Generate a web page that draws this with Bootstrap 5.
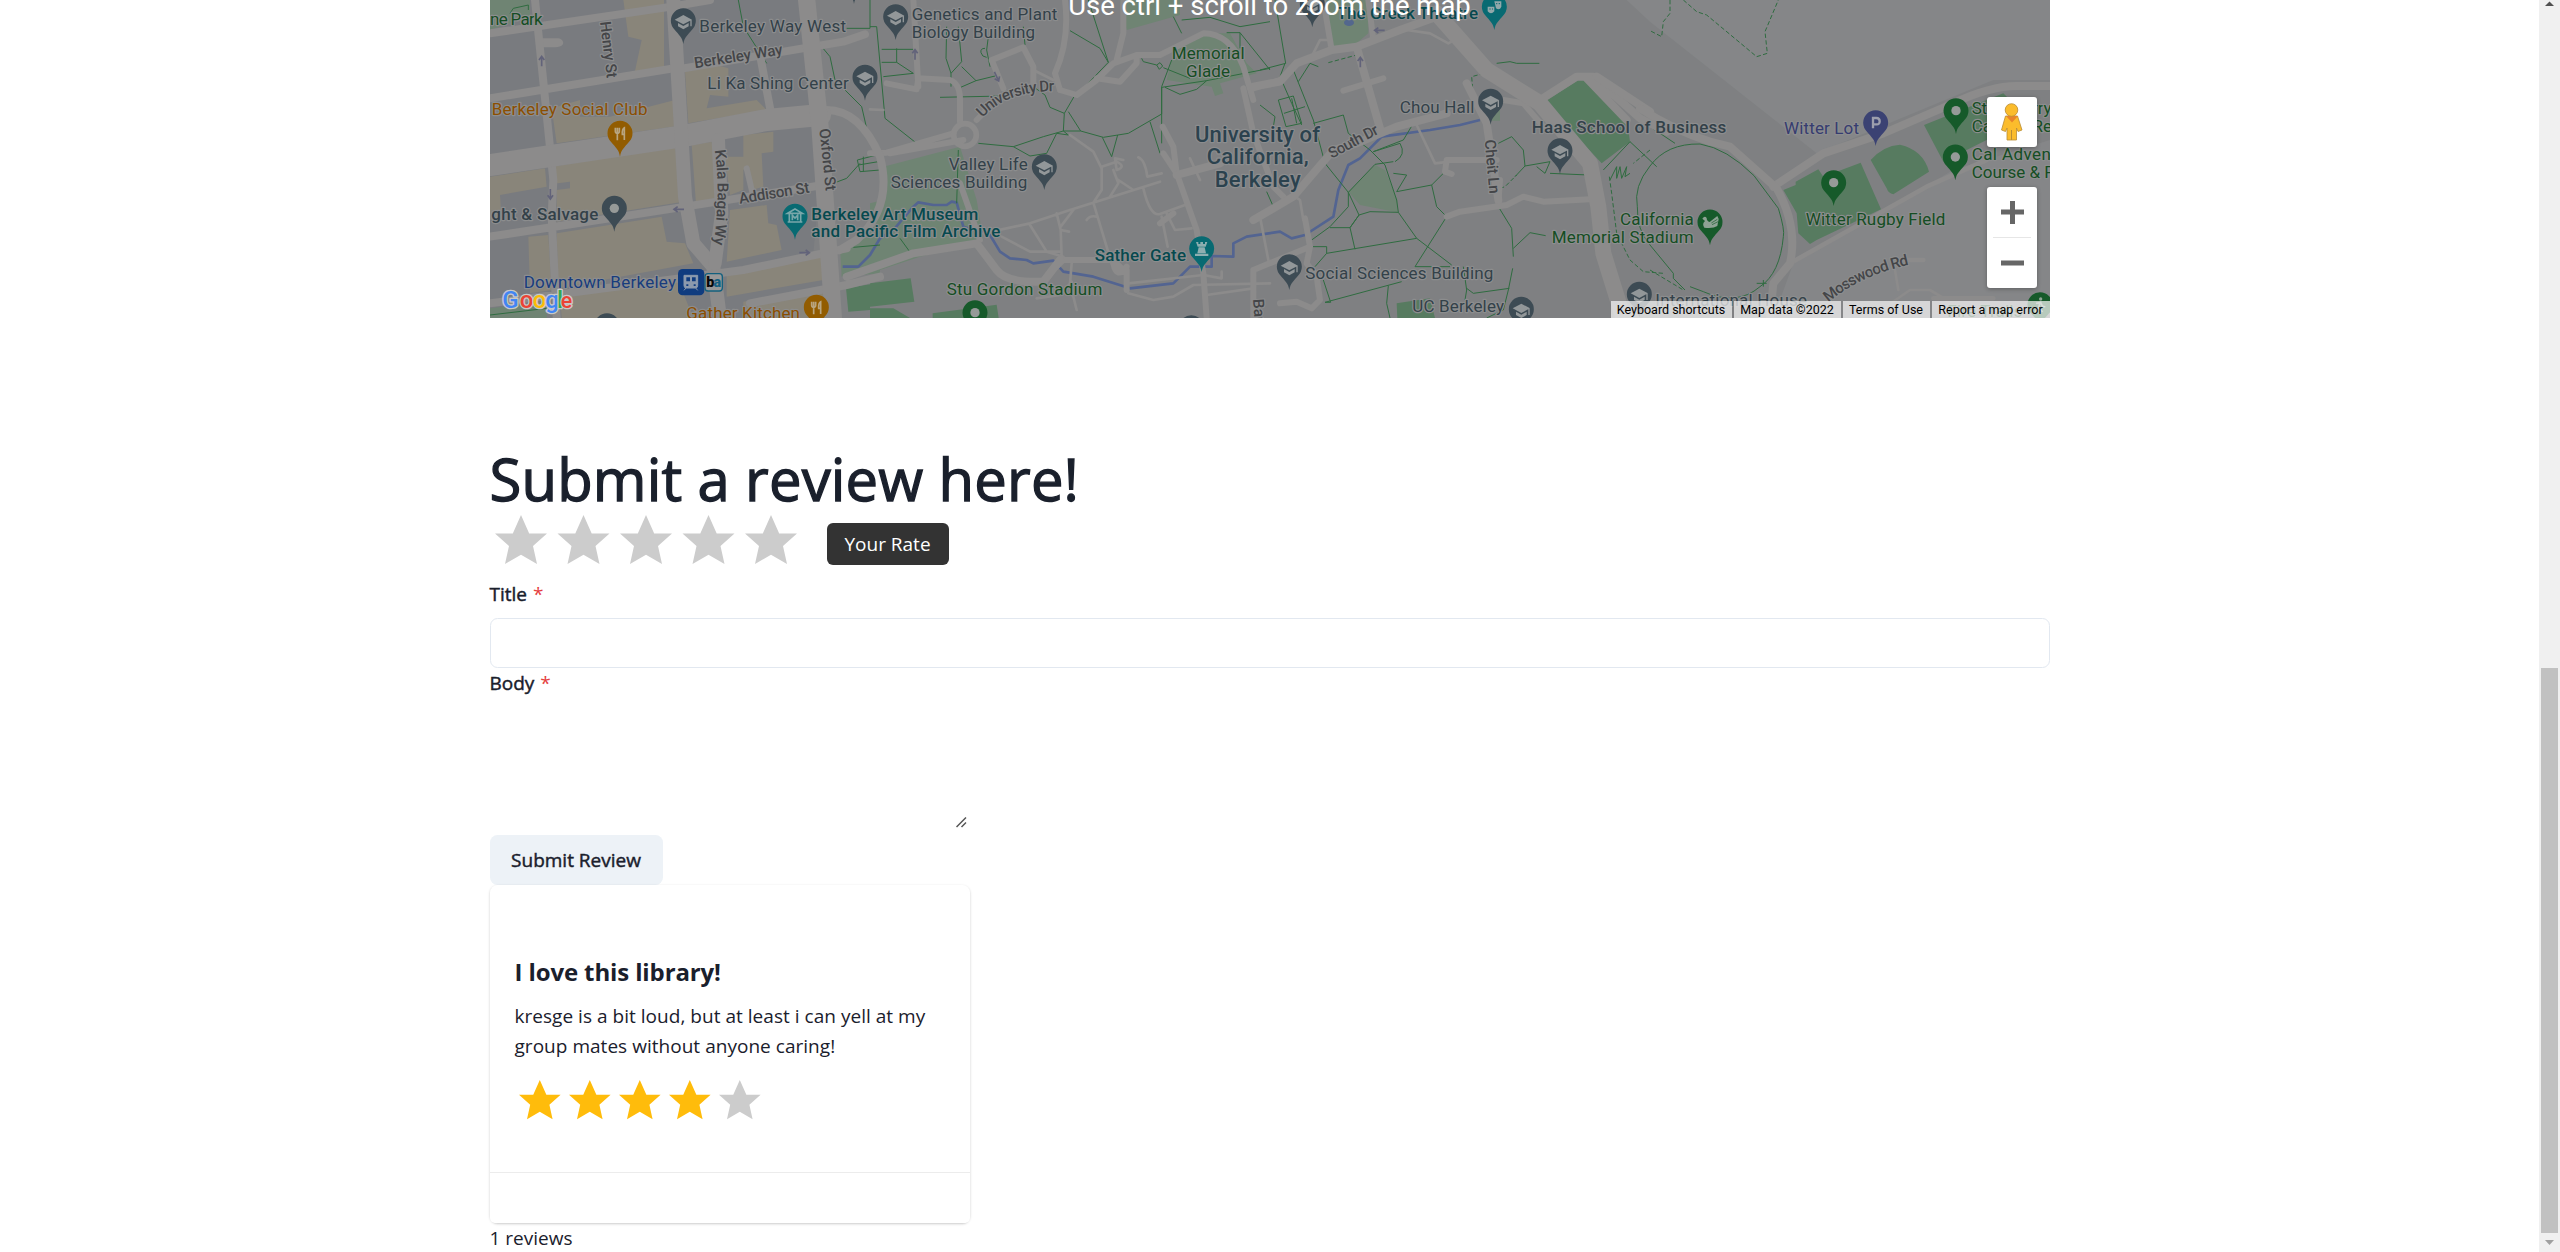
<!DOCTYPE html>
<html lang="en">
<head>
<meta charset="utf-8">
<meta name="viewport" content="width=device-width, initial-scale=1">
<title>Library reviews</title>
<link href="https://cdn.jsdelivr.net/npm/bootstrap@5.3.0/dist/css/bootstrap.min.css" rel="stylesheet">
<style>
body{font-family:"Open Sans","Noto Sans",sans-serif;font-size:19px;line-height:30px;color:#1a202c;background:#fff;height:1252px;overflow:hidden}
.page-col{width:1560px}
.map-box{height:318px;font-family:Roboto,sans-serif;background:#808183}
.map-hint{top:-11px;left:0;right:0;color:#fff;font-size:27.5px;line-height:34px}
.map-legal{right:0;bottom:0;height:17px;font-size:12.5px;line-height:17px;color:#000;gap:2px}
.map-legal span{background:rgba(245,245,245,.72);text-align:center;white-space:nowrap}
.map-btn{right:13px;width:50px;background:#fff;border-radius:3px;box-shadow:0 1px 4px rgba(0,0,0,.3)}
.peg{top:97px;height:50px}.zoomer{top:187px;height:101px}
.review-title{font-size:58px;font-weight:400;-webkit-text-stroke:1.3px #1a202c;letter-spacing:.15px;line-height:49px;margin:136px 0 0;height:60px;white-space:nowrap}
.rate-row{height:52px}
.rate-tip{background:#333;color:#fff;border-radius:6px;width:122px;height:42px;line-height:42px;text-align:center;margin:8.5px 0 0 20px;white-space:nowrap}
.field-name{-webkit-text-stroke:.45px #1a202c;display:block;height:30px}
.field-name i{font-style:normal;-webkit-text-stroke:0;color:#e53e3e;margin-left:6px}
.field-first{margin-top:13px}
.title-input{height:50px;border:1px solid #e2e8f0;border-radius:7.5px;margin-top:9px}
.body-input{display:block;width:478px;height:132px;border:0;resize:none;padding:0}
.resize-grip{left:466px;top:119px}
.btn-send{background:#edf2f7;color:#1a202c;width:173px;height:50px;border:0;border-radius:7.5px;font-size:19px;-webkit-text-stroke:.45px #1a202c;padding:1px 0 0;white-space:nowrap;margin-top:5px}
.review-card{width:480px;height:338px;border:0;border-radius:7.5px;box-shadow:0 1px 3px rgba(0,0,0,.14),0 1px 2px rgba(0,0,0,.08)}
.review-card .card-body{padding:70px 25px 0}
.review-card h2{font-size:24px;font-weight:700;letter-spacing:-.12px;line-height:34px;margin:0 0 12px;white-space:nowrap}
.review-card p{margin:0 0 19px;white-space:nowrap;letter-spacing:.03px}
.review-card .card-footer{height:51px;background:#fff;border-top:1px solid #ececec}
.scroll-rail{width:21px;background:#f0f0f0}
.scroll-rail b{display:block;width:17px;height:565px;background:#c1c1c1;margin:0 2px}
.l{font-size:51px;font-weight:400;fill:#334149;paint-order:stroke;stroke:#8c8d8e;stroke-width:7;stroke-linejoin:round}
.g{fill:#154d23}.o{fill:#8b4e00}.t{fill:#07494e;font-weight:500}.m{font-weight:500}.s{fill:#444548;font-size:46px}.b{fill:#183c7d}.v{fill:#363c70}
.big{font-size:66px;font-weight:500;fill:#2b424e}
.r{fill:none;stroke:#8c8b8b;stroke-linecap:round;stroke-linejoin:round}
.p{fill:none;stroke:#2f6c40;stroke-width:3}.d{stroke-dasharray:13 7}
.w{fill:none;stroke:#536491;stroke-width:8;stroke-linejoin:round}
</style>
<script src="https://cdn.jsdelivr.net/npm/bootstrap@5.3.0/dist/js/bootstrap.bundle.min.js"></script>
</head>
<body class="d-flex">
<svg width="0" height="0" class="position-absolute">
<defs>
<path id="star" d="M26 0L34.200 18.500L52 18.500L38 31L42 49L26 39.700L10 49L14 31L0 18.500L17.800 18.500Z"/>
<path id="pin" d="M0 70C-3 49-14 42-26 27A37.500 37.500 0 1 1 26 27C14 42 3 49 0 70Z"/>
<g id="cap"><use href="#pin" fill="#3d4b54"/><path fill="#929799" d="M-26-3L0-17L26-3L0 11ZM21-2h4v19h-4zM-16 7L0 16L16 7V17L0 26L-16 17Z"/></g>
<g id="dot"><use href="#pin"/><circle r="14" fill="#969a98"/></g>
<g id="fork"><use href="#pin" fill="#925c00"/><path d="M-14-17v11q0 6 6 6t6-6v-11M-8-17V21M13 20V-17Q6-14 7 3H13" fill="none" stroke="#b8a580" stroke-width="5"/></g>
<path id="arr" d="M0 16V-12M-8-3L0-14L8-3" fill="none" stroke="#62637a" stroke-width="5"/>
</defs>
</svg>
<main class="flex-grow-1 d-flex justify-content-center">
<div class="page-col">
<section class="map-box position-relative overflow-hidden">
<svg width="1560" height="318" viewBox="30 0 4680 954" class="d-block">
<rect x="30" width="4680" height="954" fill="#7f8082"/>
<!-- land use -->
<path fill="#797b7f" d="M30 0H980L1040 330L1000 760L1070 954H30Z"/>
<path fill="#858688" d="M3440 0L3510 65L4010 460L4540 240H4710V0ZM3940 790L4420 510L4710 420V954H3880Z"/>
<g fill="#89857a">
<path d="M430 0H552V208L463 222L485 120L445 110ZM215 325L300 300V350H390L585 300L615 375L230 430ZM615 215L710 195L745 205V290L690 285L680 325L830 300L860 330L625 370ZM30 530L195 505L200 560L60 585L65 660L30 660ZM215 500L585 440L610 605L230 665V570L270 565V545L215 552ZM230 700L545 650L560 725L615 730L640 790L235 865ZM635 435L695 425L720 600L648 612ZM790 405L880 395V455L845 460L850 560L815 570L805 500L790 510V570L750 585L735 470L790 470ZM750 630L860 615L865 670L890 675L905 750L740 785ZM145 710L205 705L215 870L150 880ZM740 810L1025 765L1030 840L740 890ZM240 890L590 830L640 954H245ZM790 905L1030 865V954H790Z"/></g>
<g fill="#6f8473"><path d="M30 0H150V50L30 90ZM30 925L200 905V954H30ZM1080 740L1200 700V820L1085 830Z"/><path fill="#577b60" d="M1098 865L1170 853V930L1105 935Z"/>
<g transform="translate(1170)"><path d="M40 500L270 440L320 600L340 720L150 770L0 820V610L40 600ZM890 240L915 140L990 100H1080L1130 190L1160 220L1050 250L1060 280L1035 288L1025 260ZM750 0H930V45L770 90Z"/><path fill="#577b60" d="M0 850L122 835L133 905L0 920ZM0 925H70L120 954H0ZM188 940L380 914L386 954H188Z"/></g>
<g transform="translate(2340)"><path d="M190 0H325V100L290 130L215 147ZM265 575L345 495L375 510L412 600V637L300 615ZM680 320H720V362H690Z"/><path fill="#577b60" d="M852 307L955 240H985L1100 355L1110 425L1025 490L940 400ZM410 910L510 895L525 954H412Z"/></g>
<g transform="translate(3510)" fill="#577b60"><path d="M400 570L437 555V545L505 508L520 530L632 488L693 628L500 720L480 732L445 700L440 640ZM662 480Q700 437 750 434Q820 450 837 515L730 583Q715 580 710 565ZM822 375L1060 280L1080 300V385L880 485Z"/></g></g>
<!-- creeks -->
<g class="w"><path d="M1088 800H1135L1170 765L1200 715L1240 690L1300 620L1315 607L1360 615H1400L1415 605L1430 608L1450 680L1530 705L1560 755L1590 775L1640 780L1660 790L1720 782L1750 815L1840 830L1950 865L2080 850L2130 800H2195V768L2260 770V730L2300 710L2400 695L2435 715L2475 705L2560 650L2575 570L2605 495L2640 475L2705 410L2850 390L2940 375L3000 360"/></g>
<ellipse cx="2607" cy="68" rx="15" ry="10" fill="#53678d"/>
<!-- footpaths -->
<g class="p">
<path d="M775 0L790 80L860 190M1025 140L1050 170L1065 240L1145 320L1160 385M1100 85H1170M1170 0V85M1065 548L1100 535L1140 490M1132 480L1190 465L1200 510L1140 515ZM1150 470V515M1135 495L1195 485M1120 742L1200 735M90 40L100 25L145 15V30M30 945L200 925"/>
<g transform="translate(1170)"><path d="M0 80H20L45 355L140 430M35 187H80L130 220L40 230M80 145V187M35 148H130M230 80L228 175L243 220V260M265 80L275 185L243 220M275 200L318 242L375 228M318 242L272 262M210 292L400 288M355 110L350 150L360 200M345 145Q330 145 333 158T350 172M325 430L430 440L520 410L580 393H632L700 412L775 400L875 342M430 440L480 468L530 460L560 400L595 405L580 393L583 340L540 322L525 285L490 260M583 340L612 290M595 335L632 393M697 412L725 470L743 405M600 92L690 145L715 187L640 265M655 0L715 187M460 80L465 135M265 450L260 610M840 365L870 460M875 342V260L905 180M875 430V262L1010 242L1200 205M885 262L930 283L980 268L1010 242M815 175L820 185L860 195M860 195L870 188L878 198L868 208ZM880 203L960 235M935 60L1020 52L1110 80L1200 65M910 50L935 100M1070 98H1110L1200 210M1110 98V145M90 715L130 770"/></g>
<g transform="translate(2340)"><path d="M45 0L77 190L0 210M75 190L60 230L95 310L125 375M55 300L100 288L125 370L78 380ZM72 340L135 320M95 295L110 370M100 210L160 360L195 490L265 577L297 645L270 683H210M115 245L150 190L175 200M160 370L250 345L265 400L330 450L375 495L410 600L415 637L470 715L575 795M265 577L345 493L400 485M340 455L420 430Q440 465 405 485M340 455L430 420L460 370M400 520L440 525L410 575L515 555L555 515M515 555L530 620L560 650L465 800H570M415 637L330 635L297 645L270 683L285 748M155 720L210 680L265 620V577M155 740H200V760L470 715M165 800L200 760M190 840L212 907H195L425 845M385 857L380 910L390 954M715 620L755 685L760 770M760 745L810 698L857 707M758 805L745 870L730 930L680 954M620 865L640 880L748 865M610 800L620 870L615 900M0 315L45 350L40 380M20 575L40 620M715 430L755 410L790 450L795 498L765 530M795 498L870 485L855 520L830 500M870 520L985 525M710 190L750 185L770 190H838M1030 510L1110 425L1190 500M1050 540L1070 500V535L1080 500L1085 535L1100 500L1095 530L1110 520"/><path class="d" d="M205 188L290 165M672 220L635 230L640 290M720 565L735 560L770 525M1170 450L1120 490M1048 530L1055 580L1070 700L1110 780L1150 815L1210 820"/></g>
<g transform="translate(3510)"><path class="d" d="M100 0L140 35L170 45L320 170L352 160L345 95L385 0M60 0L60 40L40 65L35 110L0 92M0 810L100 870"/><path d="M0 498Q50 430 150 432Q230 445 312 527L385 625Q405 690 400 710Q390 820 330 860Q260 920 160 875L120 860M0 498Q-50 560-38 620Q-40 690 0 735L70 820V835L105 870M0 380L75 430M320 850H350M340 840V860"/></g>
</g>
<!-- streets -->
<g class="r" stroke-width="8">
<g transform="translate(1170)"><path d="M490 210L550 240M600 405L670 455L695 505V570L670 608M340 700L480 670L600 630L870 545M480 675L530 755L580 770M560 640L572 690L575 770M572 680L610 630M572 690L597 695M650 660Q660 645 680 650M670 608L725 790M695 500L740 485Q770 500 740 510L735 475L760 480M730 510L745 550L720 590M745 540L790 570M820 565Q840 650 870 642L945 615M875 650L893 740M890 640L915 690L965 685M805 472Q825 480 832 530L875 520M0 328L40 330M775 850L1000 825L1055 835V815M500 895L570 885L605 845M605 790L600 850L620 930M775 880L850 900L910 890L970 855L1200 850M1010 885L1150 865M395 710L480 755H570"/></g>
<g transform="translate(2340)"><path d="M160 160L180 120H210M470 375L525 490L550 487M440 90L510 100L565 130L600 110M0 650L25 780M105 590L120 600L130 660"/></g>
<path d="M4225 915L4290 870H4350L4400 900M4245 810L4255 870M2130 475L2160 540"/>
</g>
<g class="r" stroke-width="18">
<path d="M190 133H225Q250 130 235 124H190M800 505L820 590M2040 670L2080 640M2590 272L2710 235M1220 250L1310 268L1315 235L1410 240Q1440 250 1440 300V365M1300 0L1315 260M1535 180L1630 142L1660 200V260M1535 180L1570 265M1740 270L1725 220Q1770 120 1755 0M1170 460L1220 458L1420 400M1230 460L1450 420M1490 360L1520 330M2048 380L2080 440L2090 520M2050 460L2090 520M1440 550L1500 720M2090 520L2150 690L2170 820L2180 954M2290 265L2320 400L2380 560L2420 600M2320 265L2400 240"/>
<path d="M1740 270L1790 285L1850 240L1900 190L1970 165L2040 165L2110 130L2170 100Q2250 100 2290 200L2320 300M1850 235L1920 245L1970 190V165M1910 180L1930 100V0M2530 0L2555 150M2665 0L2680 120"/>
<path d="M1750 780H1900L1930 810H1940V870M1900 790Q1910 840 1940 800M1750 780L1720 810L1690 850M2900 480H3050M2900 480L2895 515L2915 522M3070 300L3130 310L3190 380M3060 540L3055 610M2900 650L2940 635L3080 615L3130 590L3190 605L3330 598M2320 810L2490 740L2480 790L2510 830L2520 900L2495 925L2450 905L2400 910M2320 810V954M2475 655L2490 740"/>
</g>
<g class="r" stroke-width="24">
<path d="M30 100L575 20L690 0M165 0L220 540L215 650L230 954M30 295L580 205M30 710L520 635L1030 555M30 910L790 810L1100 745M810 910L1100 855L1200 830M610 205L1000 140L1090 125L1155 103M840 165L875 350M1040 330Q1140 330 1200 470Q1240 620 1130 720L1080 750M1100 830L1300 760L1490 730L1550 810Q1580 850 1690 845L1740 780"/>
<path d="M2090 525L2220 490M2320 660L2440 590L2560 450L2630 430L2750 380L2900 340M2320 260L2400 245L2450 190L2555 150L2630 140L2760 90L2870 50M2630 140L2700 385M2960 250L3020 370L3055 600M3180 300L3290 230L3340 230L3480 355L3560 395M3320 235L3440 360"/>
<path d="M3880 560L4030 460L4210 400L4420 310Q4530 258 4610 258H4710M3350 230L3510 335"/>
</g>
<circle cx="1455" cy="405" r="34" fill="none" stroke="#8c8b8b" stroke-width="17"/>
<path class="r" stroke-width="14" d="M3930 790L4340 560L4520 480M4270 780H4330M4360 895H4540"/>
<g class="r"><path d="M30 495L600 410L860 360L1020 345" stroke-width="66"/><path d="M580 0L615 590L640 730L700 800L720 954" stroke-width="42"/><path d="M715 420L725 640L705 790" stroke-width="40"/><path d="M980 0L1020 380L1060 954" stroke-width="52"/><path d="M2870 40L3020 210L3180 310L3330 490L3355 620L3370 760L3430 954" stroke-width="48"/><path d="M3480 325Q3580 390 3690 425L3750 440L3890 565Q3955 680 3930 790L3880 850L3870 954" stroke-width="24"/></g>
<use href="#arr" transform="translate(185 183)"/><use href="#arr" transform="translate(211 583) rotate(180)"/><use href="#arr" transform="translate(596 628) rotate(-90)"/><use href="#arr" transform="translate(974 758) rotate(90)"/><use href="#arr" transform="translate(1305 163)"/><use href="#arr" transform="translate(1550 230) rotate(155)"/><use href="#arr" transform="translate(2698 91) rotate(-90)"/><use href="#arr" transform="translate(2641 186)"/>
<!-- pins -->
<use href="#cap" x="610" y="62"/><use href="#cap" x="1155" y="232"/><use href="#cap" x="1247" y="50"/><use href="#cap" x="1693" y="500"/><use href="#cap" x="2497" y="12"/><use href="#cap" x="3032" y="304"/><use href="#cap" x="3240" y="452"/><use href="#cap" x="2428" y="800"/><use href="#cap" x="3124" y="928"/><use href="#cap" x="3478" y="883"/><use href="#pin" x="381" y="977" fill="#3d4b54"/><use href="#pin" x="2134" y="983" fill="#3d4b54"/><use href="#pin" x="1122" y="-58" fill="#3d4b54"/>
<use href="#dot" x="403" y="625" fill="#3d4b54"/><use href="#dot" x="1485" y="938" fill="#165a2a"/><use href="#dot" x="4061" y="548" fill="#165a2a"/><use href="#dot" x="4428" y="332" fill="#165a2a"/><use href="#dot" x="4426" y="471" fill="#165a2a"/>
<use href="#fork" x="420" y="400"/><use href="#fork" x="1009" y="922"/>
<g transform="translate(945 649)"><use href="#pin" fill="#086a72"/><path d="M-22-9L0-22L22-9ZM-17-9V15M17-9V15M-22 17H22M-8 12V-3L0 5L8-3V12" fill="none" stroke="#79a7aa" stroke-width="5"/></g>
<g transform="translate(2165 746)"><use href="#pin" fill="#086a72"/><path d="M-17-20h7v6h6v-6h8v6h6v-6h7L12-6H-12ZM-9-4H9L13 14H-13ZM-20 15H20V22H-20Z" fill="#8daeb0"/></g>
<g transform="translate(3043 20)"><use href="#pin" fill="#086a72"/><path d="M0-16H21V0Q16 12 5 5ZM-20 0H0V14Q-10 26-20 14Z" fill="#91a8aa"/><path d="M5-9h4m4 0h4M-15 7h4m4 0h3" stroke="#086a72" stroke-width="3"/></g>
<g transform="translate(3690 666)"><use href="#pin" fill="#165a2a"/><path d="M-23-10Q-16-20-10-12Q-10-3-1 0L22-18L26-9L22 12Q10 20-17 17Q-25 5-15-3Z" fill="#8ea294"/><path d="M4 3L22-8M6 8L24-1" stroke="#165a2a" stroke-width="2"/></g>
<g transform="translate(4187 368)"><use href="#pin" fill="#3b4273"/><path d="M-8 17V-14H2Q12-14 12-4T2 5H-6" fill="none" stroke="#9d9fad" stroke-width="7"/></g>
<g transform="translate(4680 914)"><use href="#pin" fill="#165a2a"/><circle cx="2" cy="-17" r="5" fill="#8ea294"/><path d="M-12-4L2-7L7 4L16 7M0-5L-4 9L-15 22M-3 9L8 22" fill="none" stroke="#8ea294" stroke-width="5"/></g>
<rect x="594" y="807" width="79" height="79" rx="14" fill="#103c7f"/><path d="M612 826H653V857Q653 864 646 864H619Q612 864 612 857ZM618 864L612 871M647 864L653 871" fill="#8b99ad" stroke="#8b99ad" stroke-width="3"/><path d="M619 832h11v12h-11zM636 832h11v12h-11zM619 853h6v5h-6zM641 853h6v5h-6z" fill="#103c7f"/>
<rect x="675" y="821" width="52" height="52" rx="9" fill="#989898" stroke="#13607e" stroke-width="4"/><text x="679" y="862" font-size="43" font-weight="900" fill="#080808">b<tspan fill="#145f80" dx="-3">a</tspan></text>
<!-- labels -->
<g class="l">
<text class="g" x="30" y="75" textLength="158">ne Park</text><text x="658" y="97" textLength="440">Berkeley Way West</text><text x="682" y="268" textLength="424">Li Ka Shing Center</text><text class="o" x="35" y="345" textLength="468">Berkeley Social Club</text><text class="m" x="34" y="659" textLength="321">ght &amp; Salvage</text><text class="b" x="131" y="865" textLength="457">Downtown Berkeley</text><text class="o" x="619" y="958" textLength="341">Gather Kitchen</text>
<text class="t" x="994" y="659" textLength="501">Berkeley Art Museum</text><text class="t" x="994" y="711" textLength="567">and Pacific Film Archive</text>
<text x="1295" y="60" textLength="437">Genetics and Plant</text><text x="1295" y="114" textLength="370">Biology Building</text><text x="1406" y="510" textLength="237">Valley Life</text><text x="1232" y="564" textLength="410">Sciences Building</text><text class="g" x="1400" y="885" textLength="467">Stu Gordon Stadium</text><text class="t" x="1844" y="783" textLength="274">Sather Gate</text><text class="g" x="2075" y="177" textLength="219">Memorial</text><text class="g" x="2118" y="230" textLength="132">Glade</text>
<g><text class="big" x="2145" y="426" textLength="375">University of</text><text class="big" x="2180" y="493" textLength="306">California,</text><text class="big" x="2204" y="560" textLength="258">Berkeley</text></g>
<text class="t" x="2570" y="57" textLength="424">The Greek Theatre</text><text x="2759" y="340" textLength="224">Chou Hall</text><text class="m" x="3155" y="398" textLength="584">Haas School of Business</text><text x="2476" y="837" textLength="564">Social Sciences Building</text><text x="2797" y="937" textLength="275">UC Berkeley</text><text class="g" x="3420" y="675" textLength="221">California</text><text class="g" x="3215" y="729" textLength="426">Memorial Stadium</text><text x="3526" y="917" textLength="455">International House</text>
<text class="v" x="3912" y="403" textLength="225">Witter Lot</text><text class="g" x="3977" y="674" textLength="419">Witter Rugby Field</text><text class="g" x="4475" y="343" textLength="240">Strawberry</text><text class="g" x="4475" y="395">Canyon Rec</text><text class="g" x="4475" y="480" textLength="285">Cal Adventu</text><text class="g" x="4475" y="533">Course &amp; Fi</text><text class="g" x="4402" y="952" textLength="225">Fire Trails</text>
<g class="m"><text class="s" transform="translate(360 66) rotate(83)" textLength="170">Henry St</text><text class="s" transform="translate(645 205) rotate(-9)" textLength="268">Berkeley Way</text><text class="s" transform="translate(1018 387) rotate(84)" textLength="187">Oxford St</text><path id="kala" d="M704 451Q716 530 712 610T700 740" fill="none" stroke="none"/><text class="s" textLength="283"><textPath href="#kala">Kala Bagai Wy</textPath></text><text class="s" transform="translate(779 611) rotate(-9)" textLength="214">Addison St</text>
<path id="udr" d="M1508 354Q1580 270 1735 274" fill="none" stroke="none"/><text class="s" textLength="237"><textPath href="#udr">University Dr</textPath></text>
<text class="s" transform="translate(2555 476) rotate(-28)" textLength="163">South Dr</text><text class="s" transform="translate(3014 420) rotate(85)" textLength="163">Cheit Ln</text><text class="s" transform="translate(2319 898) rotate(86)">Bancroft</text><path id="moss" d="M4045 908Q4140 825 4295 793" fill="none" stroke="none"/><text class="s" textLength="270"><textPath href="#moss">Mosswood Rd</textPath></text></g>
</g>
<g font-size="72" font-weight="500" paint-order="stroke" stroke="#c8c8c8" stroke-width="8" stroke-linejoin="round"><text x="67" y="925" fill="#4285f4">G</text><text x="119" y="925" fill="#ea4335">o</text><text x="158" y="925" fill="#fbbc05">o</text><text x="196" y="925" fill="#4285f4">g</text><text x="231" y="925" fill="#34a853">l</text><text x="242" y="925" fill="#ea4335" font-size="64">e</text></g>
</svg>
<div class="map-hint position-absolute text-center">Use ctrl + scroll to zoom the map</div>
<div class="map-btn peg position-absolute"><svg class="d-block" width="50" height="50" viewBox="0 0 50 50"><path d="M18.500 19H30.500L35 33L31 34.500L29.500 31V43H20V31L18.500 34.500L14.500 33Z" fill="#fbbc2c" stroke="#b98d35" stroke-width=".8"/><path d="M19 19H31L25 25.500Z" fill="#e8842a"/><circle cx="24.500" cy="13" r="6.300" fill="#fbbc2c" stroke="#b98d35" stroke-width=".8"/><path d="M24.500 33V43" stroke="#b98d35"/></svg></div>
<div class="map-btn zoomer position-absolute"><svg class="d-block" width="50" height="101" viewBox="0 0 50 101"><path d="M14 25H37M25.500 14V37M14 76H37" stroke="#666" stroke-width="5"/><path d="M6 50.500H44" stroke="#e6e6e6"/></svg></div>
<div class="map-legal position-absolute d-flex"><span style="width:121px">Keyboard shortcuts</span><span style="width:107px">Map data ©2022</span><span style="width:87px">Terms of Use</span><span style="width:118px">Report a map error</span></div>
</section>
<h1 class="review-title">Submit a review here!</h1>
<div class="rate-row d-flex"><svg width="317" height="52" viewBox="0 0 317 52" fill="#ccc"><use href="#star" x="5" y="1"/><use href="#star" x="67.500" y="1"/><use href="#star" x="130" y="1"/><use href="#star" x="192.500" y="1"/><use href="#star" x="255" y="1"/></svg><span class="rate-tip">Your Rate</span></div>
<form>
<label class="field-name field-first">Title<i>*</i></label>
<input class="form-control title-input">
<label class="field-name">Body<i>*</i></label>
<div class="position-relative"><textarea class="body-input"></textarea><svg class="resize-grip position-absolute" width="11" height="11" viewBox="0 0 11 11"><path d="M.5 10L10 .5M5.500 10L10 5.500" stroke="#555" stroke-width="1.500"/></svg></div>
<button type="button" class="btn btn-send d-block">Submit Review</button>
</form>
<article class="card review-card">
<div class="card-body"><h2>I love this library!</h2><p>kresge is a bit loud, but at least i can yell at my<br>group mates without anyone caring!</p>
<svg class="d-block" width="250" height="40" viewBox="0 0 250 40"><g fill="#ffbc0b"><use href="#star" transform="translate(4 0) scale(.8)"/><use href="#star" transform="translate(54 0) scale(.8)"/><use href="#star" transform="translate(104 0) scale(.8)"/><use href="#star" transform="translate(154 0) scale(.8)"/></g><use href="#star" fill="#ccc" transform="translate(204 0) scale(.8)"/></svg></div>
<div class="card-footer"></div>
</article>
<div>1 reviews</div>
</div>
</main>
<aside class="scroll-rail flex-shrink-0"><svg class="d-block" width="21" height="668" viewBox="0 0 21 668"><path d="M6 6L10.500 1.500L15 6Z" fill="#505050"/></svg><b></b><svg class="d-block" width="21" height="19" viewBox="0 0 21 19"><path d="M6 7H15L10.500 12Z" fill="#a0a0a0"/></svg></aside>
</body>
</html>
